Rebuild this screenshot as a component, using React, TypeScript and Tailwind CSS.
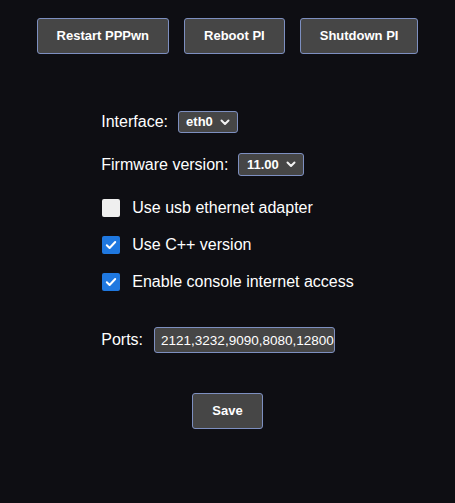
import React, { useState } from "react";

const btn =
  "h-[36px] px-[19px] rounded-[3px] border border-[#7d8fc0] bg-[#464646] text-white text-[13px] font-bold";

function Chevron() {
  return (
    <svg width="10" height="7" viewBox="0 0 10 7" className="ml-[7px]">
      <path d="M1.5 1.5 L5 5 L8.5 1.5" fill="none" stroke="#f2f2f2" strokeWidth="2" strokeLinecap="round" strokeLinejoin="round" />
    </svg>
  );
}

function Select({ value, w }: { value: string; w: string }) {
  return (
    <div
      className={`${w} flex items-center justify-center rounded-[3px] border border-[#7d8fc0] bg-[#464646] text-white text-[13px] font-bold`}
    >
      <span>{value}</span>
      <Chevron />
    </div>
  );
}

function Check({ checked, label, onToggle }: { checked: boolean; label: string; onToggle: () => void }) {
  return (
    <div className="flex items-center h-[18px] cursor-pointer" onClick={onToggle}>
      <div
        className={`w-[18px] h-[18px] rounded-[2px] flex items-center justify-center ${
          checked ? "bg-[#1f78e0]" : "bg-[#efefef]"
        }`}
      >
        {checked && (
          <svg width="12" height="10" viewBox="0 0 12 10">
            <path d="M1.8 5.2 L4.6 8 L10.2 2" fill="none" stroke="#fff" strokeWidth="2" strokeLinecap="round" strokeLinejoin="round" />
          </svg>
        )}
      </div>
      <span className="ml-[12px]">{label}</span>
    </div>
  );
}

export default function App() {
  const [usb, setUsb] = useState(false);
  const [cpp, setCpp] = useState(true);
  const [net, setNet] = useState(true);

  return (
    <main
      className="min-h-[503px] bg-[#0e0e13] text-white pt-[18px] flex flex-col items-center"
      style={{ fontFamily: '"Liberation Sans", Arial, sans-serif' }}
    >
      <div className="flex gap-[15px]">
        <button className={btn}>Restart PPPwn</button>
        <button className={btn}>Reboot PI</button>
        <button className={btn}>Shutdown PI</button>
      </div>

      <div className="mt-[57px] flex flex-col items-start text-[16px]">
        <div className="flex items-center h-[22px]">
          <span>Interface:</span>
          <div className="ml-[10px] h-[22px] flex">
            <Select value="eth0" w="w-[60px]" />
          </div>
        </div>

        <div className="mt-[20px] flex items-center h-[23px]">
          <span>Firmware version:</span>
          <div className="ml-[10px] h-[23px] flex">
            <Select value="11.00" w="w-[66px]" />
          </div>
        </div>

        <div className="mt-[23px] flex flex-col gap-[19px] pl-px">
          <Check checked={usb} label="Use usb ethernet adapter" onToggle={() => setUsb(!usb)} />
          <Check checked={cpp} label="Use C++ version" onToggle={() => setCpp(!cpp)} />
          <Check checked={net} label="Enable console internet access" onToggle={() => setNet(!net)} />
        </div>

        <div className="mt-[36px] flex items-center h-[26px]">
          <span>Ports:</span>
          <input
            className="ml-[11px] w-[181px] h-[26px] rounded-[3px] border border-[#7d8fc0] bg-[#464646] text-white text-[13.5px] pl-[6px] pr-0 outline-none"
            defaultValue="2121,3232,9090,8080,12800"
          />
        </div>
      </div>

      <button className={`${btn} mt-[40px]`}>Save</button>
    </main>
  );
}
